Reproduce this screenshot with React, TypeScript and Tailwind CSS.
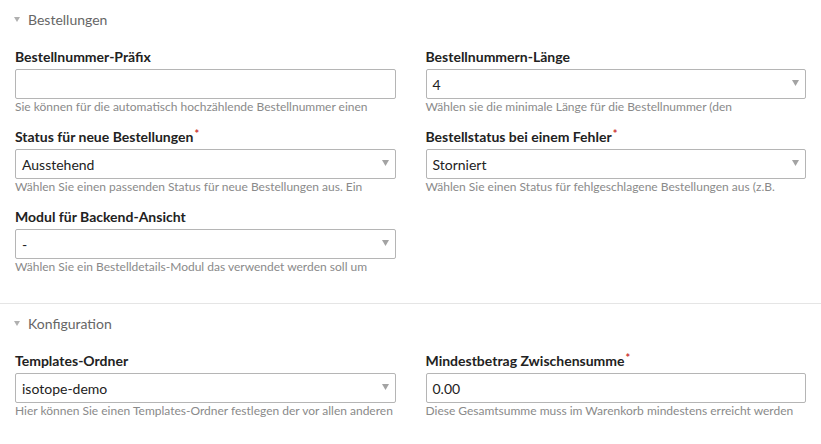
import type { ReactNode } from "react";

type Field = {
  label: string;
  required?: boolean;
  value: string;
  select?: boolean;
  help: string;
};

const ORDERS: Field[] = [
  {
    label: "Bestellnummer-Präfix",
    value: "",
    help: "Sie können für die automatisch hochzählende Bestellnummer einen",
  },
  {
    label: "Bestellnummern-Länge",
    value: "4",
    select: true,
    help: "Wählen sie die minimale Länge für die Bestellnummer (den",
  },
  {
    label: "Status für neue Bestellungen",
    required: true,
    value: "Ausstehend",
    select: true,
    help: "Wählen Sie einen passenden Status für neue Bestellungen aus. Ein",
  },
  {
    label: "Bestellstatus bei einem Fehler",
    required: true,
    value: "Storniert",
    select: true,
    help: "Wählen Sie einen Status für fehlgeschlagene Bestellungen aus (z.B.",
  },
  {
    label: "Modul für Backend-Ansicht",
    value: "-",
    select: true,
    help: "Wählen Sie ein Bestelldetails-Modul das verwendet werden soll um",
  },
];

const CONFIG: Field[] = [
  {
    label: "Templates-Ordner",
    value: "isotope-demo",
    select: true,
    help: "Hier können Sie einen Templates-Ordner festlegen der vor allen anderen",
  },
  {
    label: "Mindestbetrag Zwischensumme",
    required: true,
    value: "0.00",
    help: "Diese Gesamtsumme muss im Warenkorb mindestens erreicht werden",
  },
];

function Widget({ field }: { field: Field }) {
  return (
    <div className="px-[15px] pb-[13px]">
      <h3 className="h-[20px] text-[14px] font-bold leading-[20px] text-[#222]">
        {field.label}
        {field.required && (
          <span className="relative -top-[4px] ml-px text-[11px] font-bold text-[#c33]">*</span>
        )}
      </h3>
      <div className="relative mt-[2px] flex h-[30px] items-center rounded-[2px] border border-[#b5b5b5] bg-white px-[6px] text-[14px] text-[#222]">
        <span>{field.value}</span>
        {field.select && (
          <svg
            className="absolute right-[6px] top-[10px]"
            width="7"
            height="6"
            viewBox="0 0 7 6"
          >
            <path d="M0 0H7L3.5 6Z" fill="#a3a3a3" />
          </svg>
        )}
      </div>
      <p className="mt-px h-[14px] whitespace-nowrap text-[12px] leading-[14px] text-[#8a8a8a]">
        {field.help}
      </p>
    </div>
  );
}

function Fieldset({
  legend,
  first,
  children,
}: {
  legend: string;
  first?: boolean;
  children: ReactNode;
}) {
  return (
    <section className={`pb-[16px] ${first ? "" : "border-t border-[#e5e5e5]"}`}>
      <div className="flex h-[38px] items-center pl-[14px] text-[14px] text-[#666]">
        <svg className="mr-[8px]" width="6" height="5" viewBox="0 0 6 5">
          <path d="M0 0H6L3 5Z" fill="#b0b0b0" />
        </svg>
        {legend}
      </div>
      <div className="mt-[9px] grid grid-cols-2">{children}</div>
    </section>
  );
}

export default function App() {
  return (
    <div
      className="min-h-[444px] bg-white"
      style={{ fontFamily: "Lato, 'Open Sans', sans-serif" }}
    >
      <Fieldset legend="Bestellungen" first>
        {ORDERS.map((f, i) => (
          <Widget key={i} field={f} />
        ))}
      </Fieldset>
      <Fieldset legend="Konfiguration">
        {CONFIG.map((f, i) => (
          <Widget key={i} field={f} />
        ))}
      </Fieldset>
    </div>
  );
}
